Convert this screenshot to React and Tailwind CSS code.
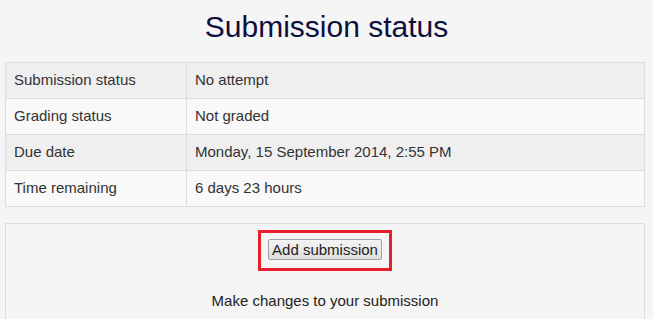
const rows = [
  ["Submission status", "No attempt"],
  ["Grading status", "Not graded"],
  ["Due date", "Monday, 15 September 2014, 2:55 PM"],
  ["Time remaining", "6 days 23 hours"],
];

export default function App() {
  return (
    <div className="min-h-[319px] bg-[#f5f5f5] font-['Liberation_Sans',Arial,sans-serif] text-[#333] overflow-hidden">
      <h2 className="text-center text-[30px] leading-[36px] text-[#0f0f3c] pt-[9px] h-[62px]">
        Submission status
      </h2>

      <table className="ml-[5px] w-[640px] border-collapse text-[15px]">
        <tbody>
          {rows.map(([label, value], i) => (
            <tr key={label} className={i % 2 === 0 ? "bg-[#efefef]" : "bg-[#f9f9f9]"}>
              <td className="w-[181px] h-[36px] border border-[#dddddd] px-[8px] py-0">{label}</td>
              <td className="h-[36px] border border-[#dddddd] px-[8px] py-0">{value}</td>
            </tr>
          ))}
        </tbody>
      </table>

      <div className="ml-[5px] mt-[16px] w-[640px] h-[100px] border border-[#dddddd] flex flex-col items-center">
        <div className="mt-[6px] border-[3px] border-[#e8202c] px-[7px] pt-[6px] pb-[8px]">
          <button className="block h-[21px] px-[3px] text-[15px] leading-[19px] text-[#222] border border-[#a0a0a0] rounded-[2px] bg-gradient-to-b from-[#f4f4f4] to-[#dedede]">
            Add submission
          </button>
        </div>
        <p className="mt-[21px] text-[15px] leading-[18px] text-[#222]">Make changes to your submission</p>
      </div>
    </div>
  );
}
